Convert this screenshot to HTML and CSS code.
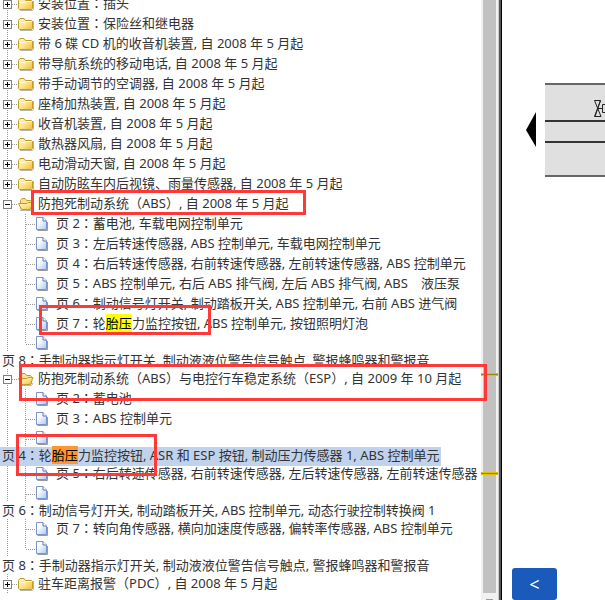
FILE: index.html
```html
<!DOCTYPE html>
<html lang="zh-CN">
<head>
    <meta charset="UTF-8">
    <meta name="viewport" content="width=device-width, initial-scale=1.0">
    <title>电路图</title>
    <link rel="stylesheet" href="styles.css">
</head>
<body>

    <!-- Shared icons -->
    <svg class="sprite" aria-hidden="true">
        <defs>
            <linearGradient id="gold" x1="0" y1="0" x2="1" y2="1">
                <stop offset="0" stop-color="#fff6c0"/>
                <stop offset="0.5" stop-color="#fde48a"/>
                <stop offset="1" stop-color="#efb93a"/>
            </linearGradient>
            <linearGradient id="paper" x1="0" y1="0" x2="1" y2="1">
                <stop offset="0.3" stop-color="#ffffff"/>
                <stop offset="1" stop-color="#a9c8f5"/>
            </linearGradient>
        </defs>
        <symbol id="folder" viewBox="0 0 16 14">
            <path d="M2 13.5H14.5L15.5 12V4" fill="none" stroke="#b5b5b5"/>
            <path d="M0.5 11.5V3.5L2 1.5H6L7.5 3.5H13.5L14.5 4.5V11.5L13.5 12.5H1.5Z" fill="url(#gold)" stroke="#c49b2b"/>
            <path d="M1.5 5.5L7 5.5L8 4.5H13.5" fill="none" stroke="#fffbe0"/>
        </symbol>
        <symbol id="folder-open" viewBox="0 0 16 14">
            <path d="M2 13.5H13.5L15 11" fill="none" stroke="#b5b5b5"/>
            <path d="M2.5 11.5V3.5L4 1.5H7L8.5 3.5H12.5L13.5 4.5V11.5Z" fill="#fbe293" stroke="#c49b2b"/>
            <path d="M0.5 6.5H9L10 5.5H15L12.5 12.5H3.5Z" fill="url(#gold)" stroke="#c49b2b"/>
        </symbol>
        <symbol id="doc" viewBox="0 0 12 14">
            <path d="M1.5 13.5H11.5V5" fill="none" stroke="#999999"/>
            <path d="M0.5 0.5H7L10.5 4V12.5H0.5Z" fill="url(#paper)" stroke="#7c94cc"/>
            <path d="M7 0.5V4H10.5" fill="#ffffff" stroke="#5577b8"/>
        </symbol>
    </svg>

    <main class="viewer">

        <!-- Tree Section -->
        <nav class="tree-pane">
            <ul class="tree">
                <li><div class="row"><button class="toggle plus" aria-label="展开"></button><svg class="folder"><use href="#folder"/></svg><a href="#">安装位置<span class="mid" lang="zh-TW">：</span>插头</a></div></li>
                <li><div class="row"><button class="toggle plus" aria-label="展开"></button><svg class="folder"><use href="#folder"/></svg><a href="#">安装位置<span class="mid" lang="zh-TW">：</span>保险丝和继电器</a></div></li>
                <li><div class="row"><button class="toggle plus" aria-label="展开"></button><svg class="folder"><use href="#folder"/></svg><a href="#">带 6 碟 CD 机的收音机装置, 自 2008 年 5 月起</a></div></li>
                <li><div class="row"><button class="toggle plus" aria-label="展开"></button><svg class="folder"><use href="#folder"/></svg><a href="#">带导航系统的移动电话, 自 2008 年 5 月起</a></div></li>
                <li><div class="row"><button class="toggle plus" aria-label="展开"></button><svg class="folder"><use href="#folder"/></svg><a href="#">带手动调节的空调器, 自 2008 年 5 月起</a></div></li>
                <li><div class="row"><button class="toggle plus" aria-label="展开"></button><svg class="folder"><use href="#folder"/></svg><a href="#">座椅加热装置, 自 2008 年 5 月起</a></div></li>
                <li><div class="row"><button class="toggle plus" aria-label="展开"></button><svg class="folder"><use href="#folder"/></svg><a href="#">收音机装置, 自 2008 年 5 月起</a></div></li>
                <li><div class="row"><button class="toggle plus" aria-label="展开"></button><svg class="folder"><use href="#folder"/></svg><a href="#">散热器风扇, 自 2008 年 5 月起</a></div></li>
                <li><div class="row"><button class="toggle plus" aria-label="展开"></button><svg class="folder"><use href="#folder"/></svg><a href="#">电动滑动天窗, 自 2008 年 5 月起</a></div></li>
                <li><div class="row"><button class="toggle plus" aria-label="展开"></button><svg class="folder"><use href="#folder"/></svg><a href="#">自动防眩车内后视镜、雨量传感器, 自 2008 年 5 月起</a></div></li>
                <li>
                    <div class="row"><button class="toggle" aria-label="折叠"></button><svg class="folder"><use href="#folder-open"/></svg><a href="#">防抱死制动系统<span class="mid" lang="zh-TW">（</span>ABS<span class="mid" lang="zh-TW">）</span>, 自 2008 年 5 月起</a></div>
                    <ul>
                        <li class="row page"><svg class="doc"><use href="#doc"/></svg><a href="#">页 2<span class="mid" lang="zh-TW">：</span>蓄电池, 车载电网控制单元</a></li>
                        <li class="row page"><svg class="doc"><use href="#doc"/></svg><a href="#">页 3<span class="mid" lang="zh-TW">：</span>左后转速传感器, ABS 控制单元, 车载电网控制单元</a></li>
                        <li class="row page"><svg class="doc"><use href="#doc"/></svg><a href="#">页 4<span class="mid" lang="zh-TW">：</span>右后转速传感器, 右前转速传感器, 左前转速传感器, ABS 控制单元</a></li>
                        <li class="row page"><svg class="doc"><use href="#doc"/></svg><a href="#">页 5<span class="mid" lang="zh-TW">：</span>ABS 控制单元, 右后 ABS 排气阀, 左后 ABS 排气阀, ABS　液压泵</a></li>
                        <li class="row page"><svg class="doc"><use href="#doc"/></svg><a href="#">页 6<span class="mid" lang="zh-TW">：</span>制动信号灯开关, 制动踏板开关, ABS 控制单元, 右前 ABS 进气阀</a></li>
                        <li class="row page"><svg class="doc"><use href="#doc"/></svg><a href="#">页 7<span class="mid" lang="zh-TW">：</span>轮<mark>胎压</mark>力监控按钮, ABS 控制单元, 按钮照明灯泡</a></li>
                        <li>
                            <div class="row page short last"><svg class="doc"><use href="#doc"/></svg></div>
                            <a class="wrapped" href="#">页 8<span class="mid" lang="zh-TW">：</span>手制动器指示灯开关, 制动液液位警告信号触点, 警报蜂鸣器和警报音</a>
                        </li>
                    </ul>
                </li>
                <li>
                    <div class="row"><button class="toggle" aria-label="折叠"></button><svg class="folder"><use href="#folder-open"/></svg><a href="#">防抱死制动系统<span class="mid" lang="zh-TW">（</span>ABS<span class="mid" lang="zh-TW">）</span>与电控行车稳定系统<span class="mid" lang="zh-TW">（</span>ESP<span class="mid" lang="zh-TW">）</span>, 自 2009 年 10 月起</a></div>
                    <ul>
                        <li class="row page"><svg class="doc"><use href="#doc"/></svg><a href="#">页 2<span class="mid" lang="zh-TW">：</span>蓄电池</a></li>
                        <li class="row page"><svg class="doc"><use href="#doc"/></svg><a href="#">页 3<span class="mid" lang="zh-TW">：</span>ABS 控制单元</a></li>
                        <li>
                            <div class="row page short"><svg class="doc"><use href="#doc"/></svg></div>
                            <a class="wrapped selected" href="#"><span>页 4<span class="mid" lang="zh-TW">：</span>轮<mark class="current">胎压</mark>力监控按钮, ASR 和 ESP 按钮, 制动压力传感器 1, ABS 控制单元</span></a>
                        </li>
                        <li class="row page"><svg class="doc"><use href="#doc"/></svg><a href="#">页 5<span class="mid" lang="zh-TW">：</span>右后转速传感器, 右前转速传感器, 左后转速传感器, 左前转速传感器</a></li>
                        <li>
                            <div class="row page short"><svg class="doc"><use href="#doc"/></svg></div>
                            <a class="wrapped" href="#">页 6<span class="mid" lang="zh-TW">：</span>制动信号灯开关, 制动踏板开关, ABS 控制单元, 动态行驶控制转换阀 1</a>
                        </li>
                        <li class="row page"><svg class="doc"><use href="#doc"/></svg><a href="#">页 7<span class="mid" lang="zh-TW">：</span>转向角传感器, 横向加速度传感器, 偏转率传感器, ABS 控制单元</a></li>
                        <li>
                            <div class="row page short last"><svg class="doc"><use href="#doc"/></svg></div>
                            <a class="wrapped" href="#">页 8<span class="mid" lang="zh-TW">：</span>手制动器指示灯开关, 制动液液位警告信号触点, 警报蜂鸣器和警报音</a>
                        </li>
                    </ul>
                </li>
                <li><div class="row"><button class="toggle plus" aria-label="展开"></button><svg class="folder"><use href="#folder"/></svg><a href="#">驻车距离报警<span class="mid" lang="zh-TW">（</span>PDC<span class="mid" lang="zh-TW">）</span>, 自 2008 年 5 月起</a></div></li>
            </ul>
        </nav>

        <!-- Scrollbar with search hits -->
        <div class="scrollbar">
            <div class="thumb"></div>
            <span class="hit hit-one"></span>
            <span class="hit hit-two"></span>
            <div class="down"></div>
        </div>
        <div class="splitter"></div>

        <!-- Diagram Section -->
        <section class="diagram">
            <svg class="circuit" viewBox="0 0 79 95" role="img" aria-label="电路图">
                <path d="M0 47L10 29V64Z" fill="#000000"/>
                <rect x="19" y="1" width="60" height="92" fill="#e0e0e0"/>
                <path d="M19 1H79M19 93H79" stroke="#666666" stroke-width="2"/>
                <path d="M19 38H79M19 59H79" stroke="#333338" stroke-width="2"/>
                <path d="M68.500 17.500H74.500L69 33.500H75L68.500 17.500M74.500 17.500L68.500 33.500H75M72 25.500H76M79 21.500H76.500V29.500H79" fill="none" stroke="#222222"/>
            </svg>
            <button class="prev" aria-label="上一页">&lt;</button>
        </section>

        <!-- Red frames round the important entries -->
        <span class="frame frame-abs"></span>
        <span class="frame frame-abs-page"></span>
        <span class="frame frame-esp"></span>
        <span class="frame frame-esp-page"></span>
    </main>

</body>
</html>
```
FILE: styles.css
```css
body {
    font-family: "Noto Sans", "Noto Sans CJK SC", sans-serif;
    font-size: 13px;
    margin: 0;
    color: #333;
    background-color: white;
}

ul {
    list-style-type: none;
    margin: 0;
    padding: 0;
}

a {
    color: inherit;
    text-decoration: none;
}

.sprite {
    position: absolute;
    width: 0;
    height: 0;
}

.viewer {
    position: relative;
    display: grid;
    grid-template-columns: 1fr 17px 4px 103px;
    height: 100vh;
    overflow: hidden;
}

/* Tree */
.tree-pane {
    overflow: hidden;
    white-space: nowrap;
}

.tree {
    margin-top: -6px;
}

.row {
    display: flex;
    align-items: center;
    height: 20px;
    padding-left: 3px;
    background-image:
        repeating-linear-gradient(to bottom, #999 0 1px, transparent 1px 2px),
        repeating-linear-gradient(to right, #999 0 1px, transparent 1px 2px);
    background-repeat: no-repeat;
    background-size: 1px 100%, 10px 1px;
    background-position: 7px 0, 8px 10px;
}

.page {
    padding-left: 36px;
    background-image:
        repeating-linear-gradient(to bottom, #999 0 1px, transparent 1px 2px),
        repeating-linear-gradient(to bottom, #999 0 1px, transparent 1px 2px),
        repeating-linear-gradient(to right, #999 0 1px, transparent 1px 2px);
    background-size: 1px 100%, 1px 100%, 10px 1px;
    background-position: 7px 0, 25px 0, 26px 10px;
}

.short {
    height: 18px;
}

.last {
    background-size: 1px 100%, 1px 10px, 10px 1px;
}

.row a {
    line-height: 18px;
    margin-left: 4px;
    padding-bottom: 2px;
}

.page a {
    margin-left: 8px;
}

.toggle {
    box-sizing: border-box;
    flex: none;
    width: 9px;
    height: 9px;
    margin: 0 6px 0 0;
    padding: 0;
    border: 1px solid #808080;
    background: linear-gradient(#000, #000) center / 5px 1px no-repeat white;
}

.plus {
    background:
        linear-gradient(#000, #000) center / 5px 1px no-repeat,
        linear-gradient(#000, #000) center / 1px 5px no-repeat white;
}

.folder {
    flex: none;
    width: 16px;
    height: 14px;
}

.doc {
    flex: none;
    width: 12px;
    height: 14px;
}

.mid {
    font-family: "Noto Sans CJK TC", sans-serif;
    line-height: 1;
}

.wrapped {
    display: block;
    height: 17px;
    line-height: 17px;
    padding-left: 2px;
}

.selected {
    padding-left: 0;
}

.selected > span {
    display: inline-block;
    height: 19px;
    padding: 0 2px;
    background-color: #c0d2ec;
}

mark {
    color: #000;
    background-color: #ff0;
}

.current {
    background-color: #ff9632;
}

/* Scrollbar */
.scrollbar {
    position: relative;
    display: flex;
    flex-direction: column;
    background-color: #f1f1f1;
}

.thumb {
    flex: 1;
    margin: 0 2px;
    background-color: #c1c1c1;
}

.down {
    width: 7px;
    height: 1px;
    margin: 6px auto 0;
    background-color: #999;
}

.hit {
    position: absolute;
    left: 0;
    right: 0;
    height: 1px;
    border: solid #e0c000;
    border-width: 1px 0;
    background-color: #a08400;
}

.hit-one {
    top: 373px;
}

.hit-two {
    top: 472px;
}

.splitter {
    box-sizing: border-box;
    border-left: 1px solid #ccc;
    border-right: 1px solid #000;
    background-color: #555;
}

/* Diagram */
.diagram {
    display: flex;
    flex-direction: column;
    justify-content: space-between;
    align-items: flex-start;
    padding: 83px 0 0 10px;
}

.circuit {
    width: 79px;
    height: 95px;
    margin-left: 14px;
}

.prev {
    width: 45px;
    height: 32px;
    padding: 0;
    border: 0;
    border-radius: 3px;
    color: white;
    background-color: #1a5aba;
    font-family: "Noto Sans", sans-serif;
    font-size: 18px;
    line-height: 28px;
}

/* Frames over the tree */
.frame {
    position: absolute;
    box-sizing: border-box;
    border: 3px solid #ff3838;
    pointer-events: none;
}

.frame-abs {
    left: 31px;
    top: 190px;
    width: 275px;
    height: 25px;
}

.frame-abs-page {
    left: 39px;
    top: 305px;
    width: 172px;
    height: 30px;
}

.frame-esp {
    left: 19px;
    top: 364px;
    width: 468px;
    height: 37px;
}

.frame-esp-page {
    left: 16px;
    top: 434px;
    width: 141px;
    height: 42px;
}
```
